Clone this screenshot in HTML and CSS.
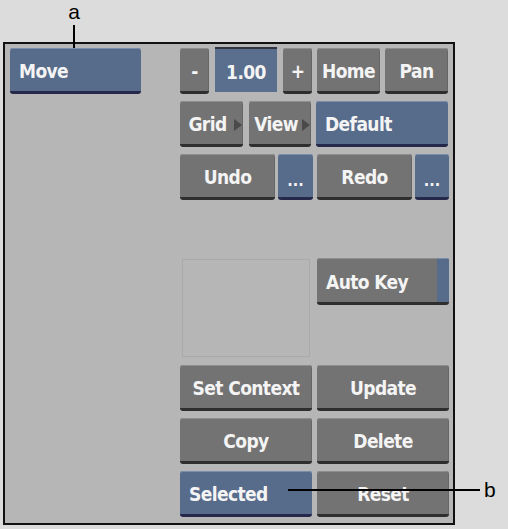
FILE: index.html
```html
<!DOCTYPE html>
<html lang="en">
<head>
  <meta charset="UTF-8">
  <meta name="viewport" content="width=device-width, initial-scale=1.0">
  <title>Modifier Controls</title>
  <link rel="stylesheet" href="styles.css">
</head>
<body>
  <div class="figure">
    <!-- callout a -->
    <div class="callout callout-a">
      <span class="callout-label">a</span>
      <span class="callout-line"></span>
    </div>

    <div class="panel">
      <div class="left-col">
        <div class="btn blue left w-move">Move</div>
      </div>

      <div class="right-col">
        <div class="row">
          <div class="btn w-step">-</div>
          <div class="field">1.00</div>
          <div class="btn w-step">+</div>
          <div class="btn w-half">Home</div>
          <div class="btn w-half">Pan</div>
        </div>

        <div class="row">
          <div class="btn arrow w-grid">Grid</div>
          <div class="btn arrow w-view">View</div>
          <div class="btn blue left w-col">Default</div>
        </div>

        <div class="row row-undo">
          <div class="btn w-undo">Undo</div>
          <div class="btn blue dots w-dots">...</div>
          <div class="btn w-undo">Redo</div>
          <div class="btn blue dots w-dots-end">...</div>
        </div>

        <div class="row row-tall">
          <div class="preview"></div>
          <div class="btn left autokey w-col">
            <span class="autokey-label">Auto Key</span>
            <span class="autokey-stripe"></span>
          </div>
        </div>

        <div class="row">
          <div class="btn w-col">Set Context</div>
          <div class="btn w-col">Update</div>
        </div>

        <div class="row">
          <div class="btn w-col">Copy</div>
          <div class="btn w-col">Delete</div>
        </div>

        <div class="row">
          <div class="btn blue left w-col">Selected</div>
          <div class="btn w-col">Reset</div>
        </div>
      </div>
    </div>

    <!-- callout b -->
    <div class="callout callout-b">
      <span class="callout-line"></span>
      <span class="callout-label">b</span>
    </div>
  </div>
</body>
</html>
```

FILE: styles.css
```css
body {
  margin: 0;
  background-color: #dcdcdc;
  font-family: "DejaVu Sans Condensed", "DejaVu Sans", sans-serif;
}

.figure {
  position: relative;
  width: 508px;
  height: 529px;
  overflow: hidden;
}

.panel {
  box-sizing: border-box;
  width: 452px;
  height: 483px;
  margin: 42px 0 0 3px;
  padding: 4px 0 0 5px;
  border: 2px solid #111;
  background: #b6b6b6;
  display: flex;
}

.left-col {
  width: 131px;
}

.right-col {
  margin-left: 39px;
  width: 269px;
  display: flex;
  flex-direction: column;
  gap: 7px;
}

.row {
  display: flex;
  gap: 5px;
  height: 46px;
}

.row-undo {
  gap: 3px;
}

.row-tall {
  height: 100px;
  margin-top: 51px;
}

/* buttons */
.btn {
  position: relative;
  box-sizing: border-box;
  height: 46px;
  display: flex;
  align-items: center;
  justify-content: center;
  padding-top: 3px;
  background: #737373;
  border-bottom: 3px solid #2e2e2e;
  border-radius: 3px;
  box-shadow: inset 0 1px 0 #8e8e8e, inset -1px 0 0 #666;
  color: #f4f4f4;
  font-size: 19px;
  font-weight: bold;
  letter-spacing: -0.6px;
  white-space: nowrap;
}

.btn.blue {
  background: #576b8b;
  border-bottom-color: #25284a;
  box-shadow: inset 0 1px 0 #7a8dab;
}

.btn.left {
  justify-content: flex-start;
  padding-left: 9px;
}

.btn.dots {
  align-items: flex-end;
  padding-bottom: 7px;
  font-size: 16px;
  letter-spacing: 0;
}

.w-move { width: 131px; }
.w-step { width: 29px; }
.w-half { width: 63px; }
.w-grid { width: 63px; }
.w-view { width: 62px; margin-left: 1px; }
.w-col { width: 132px; }
.w-undo { width: 95px; }
.w-dots { width: 35px; margin-right: 1px; }
.w-dots-end { width: 34px; }

.field + .w-step,
.w-step + .field {
  margin-left: 1px;
}

.field {
  box-sizing: border-box;
  width: 62px;
  height: 45px;
  margin-top: -1px;
  padding-top: 2px;
  display: flex;
  align-items: center;
  justify-content: center;
  background: #5a6e8e;
  border-top: 2px solid #2f3340;
  color: #f4f4f4;
  font-size: 19px;
  font-weight: bold;
  letter-spacing: -0.6px;
}

.btn.arrow {
  padding-right: 8px;
}

.btn.arrow::after {
  content: "";
  position: absolute;
  right: 1px;
  top: 18px;
  border-left: 8px solid #4a4a4a;
  border-top: 6px solid transparent;
  border-bottom: 6px solid transparent;
}

.preview {
  box-sizing: border-box;
  width: 128px;
  height: 98px;
  margin: 1px 2px 0 2px;
  border: 1px solid #aaaaaa;
}

.btn.autokey {
  height: 47px;
  padding-right: 0;
  overflow: hidden;
}

.autokey-label {
  flex: 1;
}

.autokey-stripe {
  align-self: stretch;
  width: 12px;
  margin-top: -3px;
  margin-bottom: -2px;
  background: #576b8b;
  box-shadow: inset 0 1px 0 #7a8dab;
}

/* callouts */
.callout {
  position: absolute;
  display: flex;
  align-items: center;
  font-family: "Liberation Sans", Arial, sans-serif;
  font-size: 21px;
  color: #000;
}

.callout-line {
  background: #000;
}

.callout-a {
  left: 62px;
  top: 0;
  width: 24px;
  flex-direction: column;
}

.callout-a .callout-line {
  width: 2px;
  height: 37px;
  margin-top: 1px;
}

.callout-b {
  left: 288px;
  top: 478px;
}

.callout-b .callout-line {
  width: 192px;
  height: 2px;
  margin-right: 4px;
}
```
